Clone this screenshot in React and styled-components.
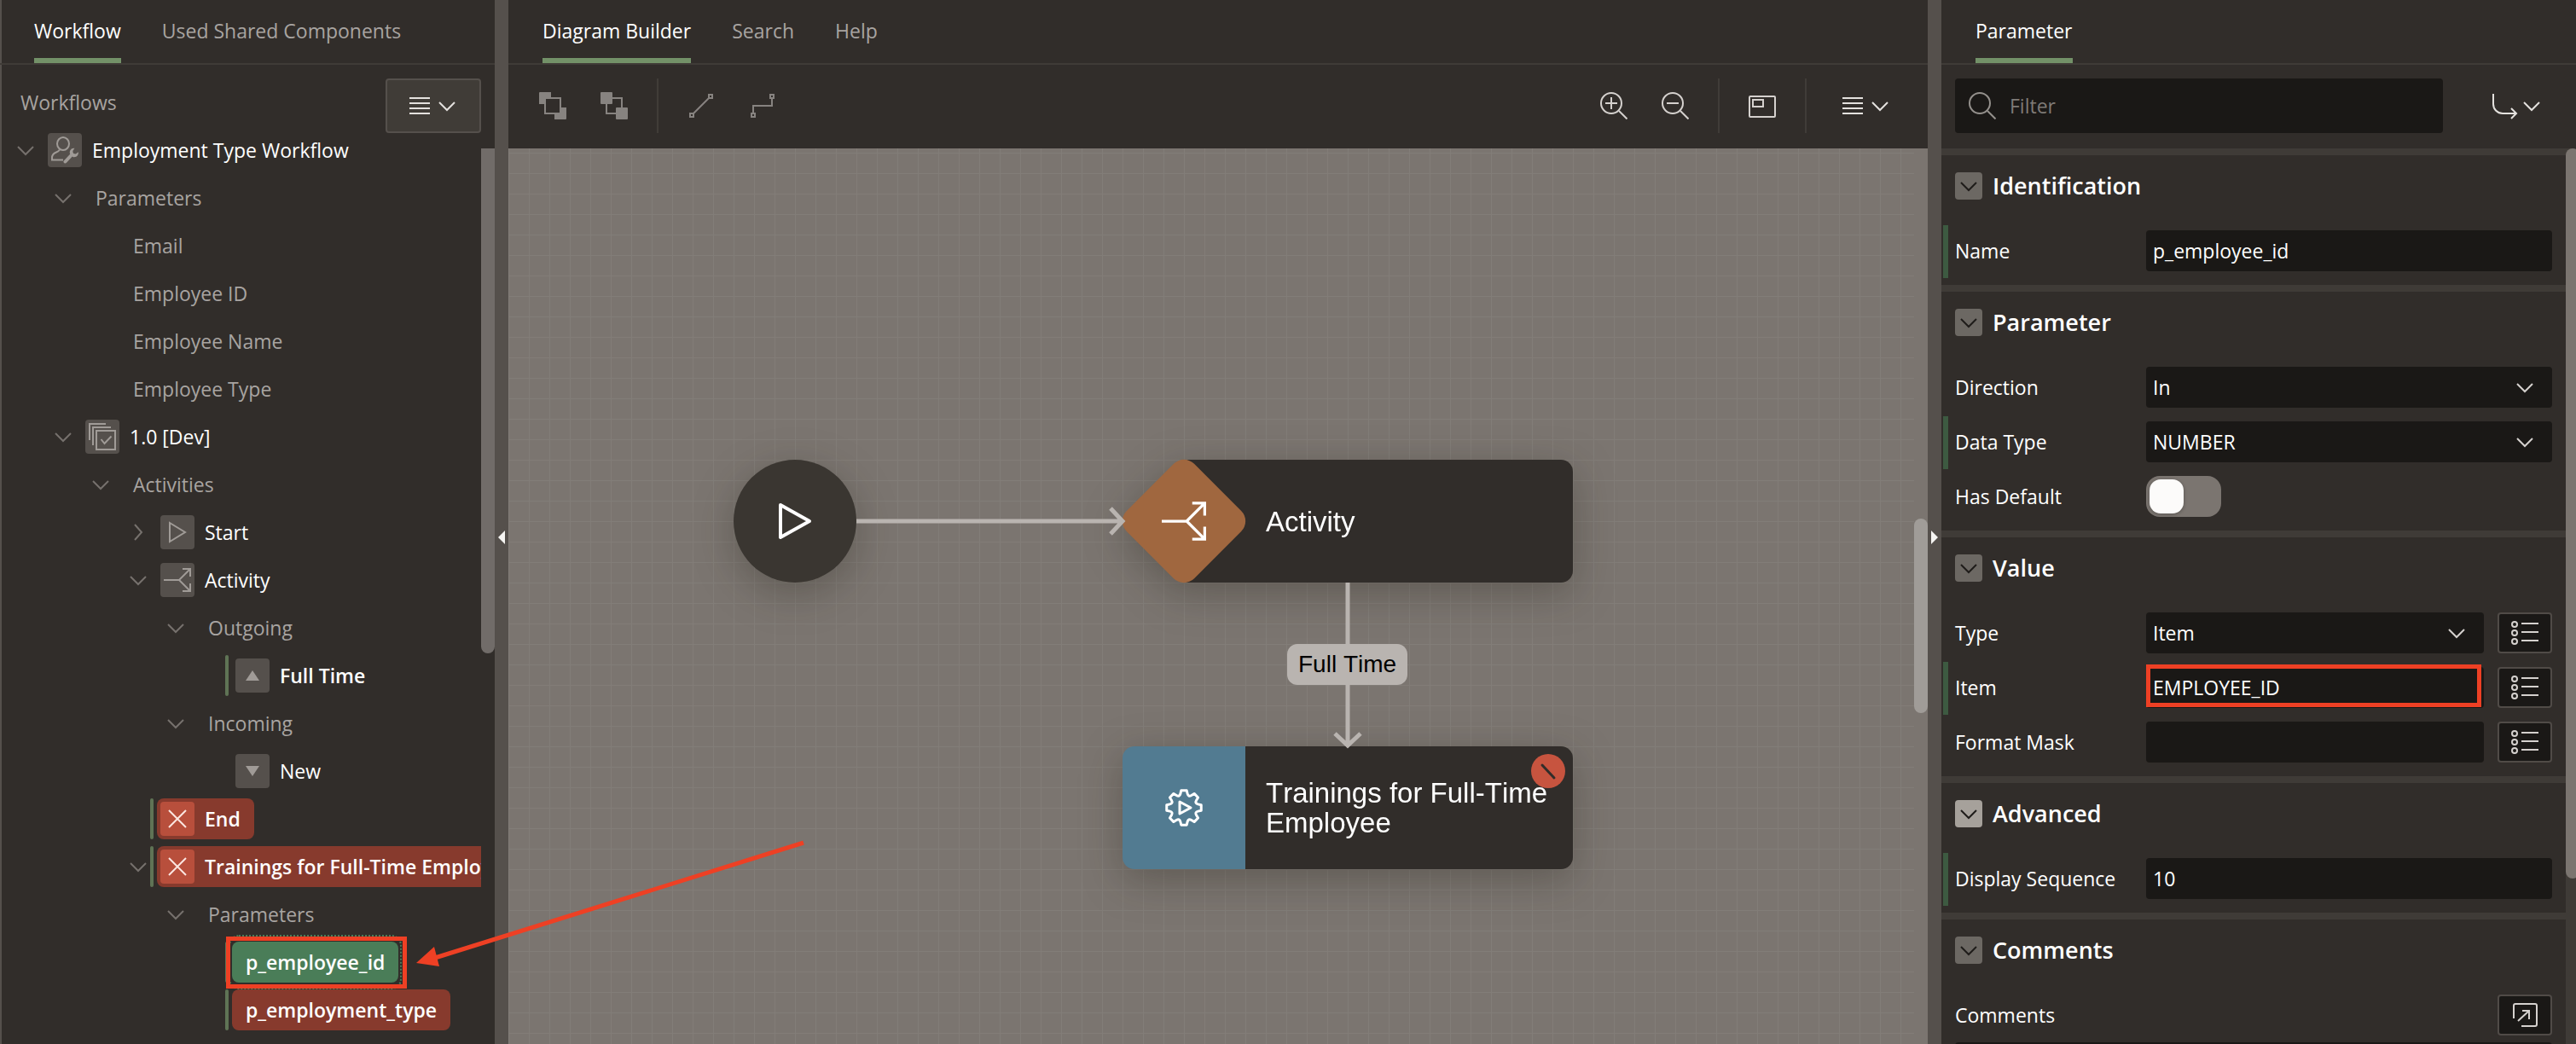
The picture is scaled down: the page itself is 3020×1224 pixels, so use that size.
import React, { useState } from "react";
import styled, { createGlobalStyle, css } from "styled-components";

const c = {
  panel: "#312d2a",
  line: "#3f3b37",
  splitter: "#55504c",
  field: "#1a1816",
  canvas: "#7b7570",
  grid: "#827d78",
  muted: "#a8a4a1",
  icon: "#d5d1ce",
  edge: "#b9b4b0",
  note: "#ee4024",
};

const GlobalStyle = createGlobalStyle`
  *, *::before, *::after { box-sizing: border-box; }
  body { margin: 0; background: ${c.panel}; color: #fff; overflow: hidden; }
  body, button, input, select, textarea {
    font-family: "Open Sans", "Noto Sans", sans-serif;
    font-size: 23px;
    line-height: 32px;
  }
  button { margin: 0; padding: 0; border: 0; background: none; color: inherit; cursor: pointer; }
  ul { margin: 0; padding: 0; list-style: none; }
  svg { display: block; flex: none; }
`;

/* ---------- icons ---------- */

const Svg = ({ size = 32, box = 32, width = 2, children }) => (
  <svg width={size} height={size} viewBox={`0 0 ${box} ${box}`} fill="none" stroke="currentColor"
    strokeWidth={width} aria-hidden="true">
    {children}
  </svg>
);

const Chevron = ({ right }) => (
  <Svg size={24} box={24}>
    <path d={right ? "M8 3l8 9-8 9" : "M3 8l9 9 9-9"} />
  </Svg>
);
const MenuLines = () => (
  <Svg size={24} box={24}><path d="M0 3h24M0 9h24M0 15h24M0 21h24" /></Svg>
);
const UserWrench = () => (
  <Svg>
    <ellipse cx="14" cy="8.5" rx="7" ry="7.5" />
    <path d="M10 15.5c-1 1.5-2 2.2-4 3-3 1.2-5 3-5 6.5v2.500h13" />
    <path d="M16.5 29.5l8-8.5" strokeWidth="4" strokeLinecap="round" />
    <path d="M27.5 13.8a5 5 0 0 0-5.5 6.5l3.5 3.700a5 5 0 0 0 6.300-5.700l-3 2.200-3-.5-.5-3z" fill="currentColor" stroke="none" />
  </Svg>
);
const Version = () => (
  <Svg>
    <path d="M1 20V1h19M5 26V5h21" />
    <rect x="9" y="9" width="22" height="22" />
    <path d="M14.5 19l4 5 8-8.5" />
  </Svg>
);
const Play = () => <Svg><path d="M7 5l18 11L7 27z" /></Svg>;
const Branch = ({ size }) => (
  <Svg size={size}><path d="M0 16h18L31 3M18 16l13 13M22 3h9v9M22 29h9v-9" /></Svg>
);
const TriangleUp = () => <Svg><path d="M16 10l8 12H8z" fill="currentColor" stroke="none" /></Svg>;
const TriangleDown = () => <Svg><path d="M16 22l8-12H8z" fill="currentColor" stroke="none" /></Svg>;
const Cross = () => <Svg><path d="M6 6l20 20M26 6L6 26" /></Svg>;
const BringFront = () => (
  <Svg>
    <path d="M0 1a1 1 0 0 1 1-1h13v14H0zM18 18h14v13a1 1 0 0 1-1 1H18z" fill="currentColor" stroke="none" />
    <rect x="7" y="7" width="18" height="18" fill={c.panel} />
  </Svg>
);
const SendBack = () => (
  <Svg>
    <rect x="7" y="7" width="18" height="18" />
    <rect width="14" height="14" rx="1" fill="currentColor" stroke="none" />
    <rect x="18" y="18" width="14" height="14" rx="1" fill="currentColor" stroke="none" />
  </Svg>
);
const StraightLine = () => (
  <Svg><path d="M3 25h4v4H3zM25 3h4v4h-4zM7 25L25 7" /></Svg>
);
const ElbowLine = () => (
  <Svg><path d="M3 25h4v4H3zM25 3h4v4h-4zM5 25V16h22V7" /></Svg>
);
const Lens = ({ plus, minus }) => (
  <Svg>
    <circle cx="13" cy="13" r="12" />
    <path d="M22 22l9.5 9.5" />
    {(plus || minus) && <path d="M6 13h14" />}
    {plus && <path d="M13 6v14" />}
  </Svg>
);
const MiniMap = () => (
  <Svg>
    <rect x="1" y="5" width="30" height="24" rx="1" />
    <rect x="5" y="9" width="12" height="8" />
  </Svg>
);
const GoTo = () => (
  <Svg><path d="M3 2v12a11 11 0 0 0 11 11h15M24 19l6 6-6 6" /></Svg>
);
const ListIcon = () => (
  <Svg>
    <circle cx="4" cy="6" r="3" /><circle cx="4" cy="16" r="3" /><circle cx="4" cy="26" r="3" />
    <path d="M12 5h20M12 15h20M12 25h20" />
  </Svg>
);
const OpenEditor = () => (
  <Svg>
    <path d="M3 20V5a2 2 0 0 1 2-2h23a2 2 0 0 1 2 2v22a2 2 0 0 1-2 2H12M8 23l13-12M13 11h8v10" />
  </Svg>
);

const gearPath = (() => {
  const pt = (r, deg) => {
    const a = (deg * Math.PI) / 180;
    return `${(24 + r * Math.cos(a)).toFixed(2)} ${(24 + r * Math.sin(a)).toFixed(2)}`;
  };
  let d = "";
  for (let i = 0; i < 8; i += 1) {
    const t = i * 45;
    d += `${i ? "L" : "M"}${pt(17, t - 14)} L${pt(20.5, t - 9)} L${pt(20.5, t + 9)} L${pt(17, t + 14)} Q${pt(13.5, t + 22.5)} ${pt(17, t + 31)} `;
  }
  return `${d}Z`;
})();
const Gear = () => (
  <Svg size={48} box={48} width={3}>
    <path d={gearPath} strokeLinejoin="round" />
    <path d="M19 17l13 7-13 7z" strokeLinejoin="round" />
  </Svg>
);

/* ---------- frame ---------- */

const Frame = styled.div`
  position: relative;
  display: grid;
  grid-template-columns: 580px 16px minmax(0, 1fr) 16px 744px;
  height: 100vh;
  overflow: hidden;
`;

const Panel = styled.section`
  display: flex;
  flex-direction: column;
  min-width: 0;
  min-height: 0;
  background: ${c.panel};
  ${(p) => p.$edge && css`box-shadow: inset 2px 0 ${c.splitter};`}
`;

const TabBar = styled.div`
  display: flex;
  flex: none;
  gap: 48px;
  height: 76px;
  padding: 0 40px;
  border-bottom: 2px solid ${c.line};
`;

const Tab = styled.button`
  height: 74px;
  padding-top: 4px;
  border-bottom: 6px solid ${(p) => (p.$active ? "#739168" : "transparent")};
  color: ${(p) => (p.$active ? "#fff" : c.muted)};
  white-space: nowrap;
`;

const Splitter = styled.div`
  display: flex;
  align-items: center;
  justify-content: center;
  padding-top: 36px;
  background: ${c.splitter};
`;

const Collapse = styled.button`
  border: 8px solid transparent;
  border-left-width: ${(p) => (p.$right ? 8 : 0)}px;
  border-right-width: ${(p) => (p.$right ? 0 : 8)}px;
  border-left-color: ${(p) => (p.$right ? "#f5f4f2" : "transparent")};
  border-right-color: ${(p) => (p.$right ? "transparent" : "#f5f4f2")};
`;

const Tabs = ({ items }) => (
  <TabBar role="tablist">
    {items.map((name, i) => (
      <Tab key={name} type="button" role="tab" aria-selected={i === 0} $active={i === 0}>{name}</Tab>
    ))}
  </TabBar>
);

/* ---------- tree ---------- */

const TreeHead = styled.div`
  display: flex;
  flex: none;
  align-items: flex-start;
  justify-content: space-between;
  height: 72px;
  padding: 16px 16px 0 24px;
  color: ${c.muted};
  line-height: 56px;
`;

const MenuButton = styled.button`
  display: flex;
  align-items: center;
  gap: 8px;
  height: 64px;
  padding: 0 24px;
  color: #e4e1de;
  ${(p) => p.$boxed && css`
    padding: 0 26px;
    border: 2px solid ${c.splitter};
    border-radius: 4px;
    background: #403c37;
  `}
`;

const TreeBody = styled.div`
  display: flex;
  flex: 1;
  min-height: 0;
`;

const Tree = styled.ul`
  flex: 1;
  min-width: 0;
  overflow: hidden;
`;

const Row = styled.li`
  display: flex;
  align-items: center;
  height: 56px;
  padding-left: ${(p) => p.$level * 44 + 18}px;
`;

const Twisty = styled.button`
  display: flex;
  flex: none;
  width: 26px;
  color: #76716d;
`;

const Change = styled.span`
  flex: none;
  width: 4px;
  height: 48px;
  margin-right: 4px;
  border-radius: 2px;
  background: ${(p) => (p.$on ? "#5f7355" : "transparent")};
`;

const pillTone = { error: "#873a2d", selected: "#4a7d58" };

const pillWeight = (p) => {
  if (p.$strong) return 600;
  return p.$group ? 400 : 500;
};

const Pill = styled.div`
  position: relative;
  display: flex;
  flex: none;
  align-items: center;
  height: 48px;
  padding: 0 4px;
  border-radius: 8px;
  background: ${(p) => pillTone[p.$tone] || "transparent"};
  color: ${(p) => (p.$group ? c.muted : "#fff")};
  font-weight: ${pillWeight};
  white-space: nowrap;
  ${(p) => p.$tone === "selected" && css`
    &::after {
      content: "";
      position: absolute;
      inset: -8px -4px;
      border: 2px dotted #4a7d58;
      border-radius: 12px;
    }
  `}
`;

const TypeIcon = styled.span`
  display: flex;
  align-items: center;
  justify-content: center;
  width: 40px;
  height: 40px;
  border-radius: 4px;
  background: ${(p) => (p.$error ? "#b84f3c" : c.splitter)};
  color: ${(p) => (p.$error ? "#fbe6e1" : "#a09b97")};
`;

const Caption = styled.span`
  padding: 0 12px;
`;

const PillNote = styled.span`
  position: absolute;
  inset: -6px -10px -7px -7px;
  z-index: 1;
  border: 5px solid ${c.note};
`;

const Track = styled.div`
  flex: none;
  width: ${(p) => p.$width || 16}px;
  padding-top: ${(p) => p.$top || 0}px;
  overflow: hidden;
  ${(p) => p.$track && css`background: ${p.$track};`}
`;

const Thumb = styled.div`
  width: 16px;
  height: ${(p) => p.$length}px;
  border-radius: ${(p) => (p.$cut ? "0 0 8px 8px" : "8px")};
  background: ${(p) => p.$color};
`;

const nodes = [
  { level: 0, label: "Employment Type Workflow", icon: UserWrench, open: true },
  { level: 1, label: "Parameters", open: true, group: true },
  { level: 2, label: "Email", group: true },
  { level: 2, label: "Employee ID", group: true },
  { level: 2, label: "Employee Name", group: true },
  { level: 2, label: "Employee Type", group: true },
  { level: 1, label: "1.0 [Dev]", icon: Version, open: true },
  { level: 2, label: "Activities", open: true, group: true },
  { level: 3, label: "Start", icon: Play, open: false },
  { level: 3, label: "Activity", icon: Branch, open: true },
  { level: 4, label: "Outgoing", open: true, group: true },
  { level: 5, label: "Full Time", icon: TriangleUp, changed: true, strong: true },
  { level: 4, label: "Incoming", open: true, group: true },
  { level: 5, label: "New", icon: TriangleDown },
  { level: 3, label: "End", icon: Cross, changed: true, strong: true, tone: "error" },
  { level: 3, label: "Trainings for Full-Time Employee", icon: Cross, open: true, changed: true, strong: true, tone: "error" },
  { level: 4, label: "Parameters", open: true, group: true },
  { level: 5, label: "p_employee_id", changed: true, strong: true, tone: "selected" },
  { level: 5, label: "p_employment_type", changed: true, strong: true, tone: "error" },
];

const TreeRow = ({ node }) => {
  const Icon = node.icon;
  const branch = node.open !== undefined;
  return (
    <Row role="treeitem" aria-level={node.level + 1} aria-expanded={branch ? node.open : undefined}
      aria-selected={node.tone === "selected"} $level={node.level}>
      <Twisty as={branch ? "button" : "span"} type={branch ? "button" : undefined}
        aria-label={branch ? `Toggle ${node.label}` : undefined}>
        {branch && <Chevron right={!node.open} />}
      </Twisty>
      <Change $on={node.changed} />
      <Pill $tone={node.tone} $group={node.group} $strong={node.strong}>
        {Icon && <TypeIcon $error={node.tone === "error"}><Icon /></TypeIcon>}
        <Caption>{node.label}</Caption>
        {node.tone === "selected" && <PillNote />}
      </Pill>
    </Row>
  );
};

/* ---------- diagram ---------- */

const Toolbar = styled.div`
  display: flex;
  flex: none;
  align-items: center;
  gap: 8px;
  height: 98px;
  padding: 0 20px 2px;
`;

const ToolButton = styled.button`
  display: flex;
  align-items: center;
  justify-content: center;
  width: 64px;
  height: 64px;
  color: ${(p) => (p.disabled ? "#878380" : c.icon)};
`;

const Divider = styled.span`
  width: 2px;
  height: 64px;
  margin: 0 10px;
  background: #403c38;
`;

const Spacer = styled.span`
  flex: 1;
`;

const CanvasRow = styled.div`
  display: flex;
  flex: 1;
  min-height: 0;
  background: ${c.canvas};
`;

const Canvas = styled.div`
  position: relative;
  flex: 1;
  min-width: 0;
  overflow: hidden;
  background-image: linear-gradient(to right, ${c.grid} 1px, transparent 1px),
    linear-gradient(to bottom, ${c.grid} 1px, transparent 1px);
  background-size: 24px 24px;
  background-position: 0 5px;
  font-family: "Liberation Sans", Arial, sans-serif;
  font-kerning: none;
`;

const Node = styled.div`
  position: absolute;
  left: ${(p) => p.$x}px;
  top: ${(p) => p.$y}px;
  display: flex;
  width: 528px;
  height: 144px;
  filter: drop-shadow(0 12px 24px rgba(30, 25, 15, 0.3));
`;

const StartNode = styled(Node)`
  align-items: center;
  justify-content: center;
  width: 144px;
  border-radius: 50%;
  background: #3a3631;
`;

const NodeBody = styled.div`
  display: flex;
  flex: 1;
  align-items: center;
  padding: 0 20px 0 24px;
  border-radius: 0 14px 14px 0;
  background: ${c.panel};
  font-size: 33px;
  line-height: 35px;
  ${(p) => p.$tucked && css`
    margin-left: -72px;
    padding-left: 96px;
  `}
`;

const NodeIcon = styled.div`
  position: relative;
  z-index: 1;
  display: flex;
  align-items: center;
  justify-content: center;
  width: 144px;
  border-radius: 14px 0 0 14px;
  background: ${(p) => p.$color || "transparent"};
`;

const Diamond = styled.span`
  position: absolute;
  z-index: -1;
  width: 112px;
  height: 112px;
  border-radius: 17px;
  background: #a0673f;
  transform: rotate(45deg);
`;

const Edges = styled.svg`
  position: absolute;
  left: 0;
  top: 0;
`;

const EdgeLabel = styled.div`
  position: absolute;
  left: 913px;
  top: 581px;
  padding: 8px 13px;
  border-radius: 12px;
  background: ${c.edge};
  color: #000;
  font-size: 28px;
`;

const ErrorBadge = styled.span`
  position: absolute;
  top: 9px;
  right: 9px;
  display: flex;
  align-items: center;
  justify-content: center;
  width: 40px;
  height: 40px;
  border-radius: 50%;
  background: #c7543f;
  color: ${c.panel};
`;

/* ---------- properties ---------- */

const FilterBar = styled.div`
  display: flex;
  flex: none;
  align-items: center;
  gap: 32px;
  height: 98px;
  padding: 0 16px 2px;
`;

const FilterBox = styled.label`
  display: flex;
  flex: 1;
  align-items: center;
  gap: 16px;
  height: 64px;
  padding: 0 16px;
  border-radius: 4px;
  background: ${c.field};
  color: #94908c;
`;

const FilterInput = styled.input`
  flex: 1;
  min-width: 0;
  padding: 0;
  border: 0;
  outline: 0;
  background: none;
  color: #fff;
  &::placeholder { color: #7f7b77; opacity: 1; }
`;

const GoButton = styled(MenuButton)`
  gap: 4px;
`;

const PropBody = styled.div`
  display: flex;
  flex: 1;
  min-height: 0;
  overflow: hidden;
`;

const PropList = styled.div`
  flex: 1;
  min-width: 0;
`;

const Section = styled.section`
  padding-bottom: 8px;
  border-top: 8px solid ${c.line};
`;

const SectionHead = styled.header`
  display: flex;
  align-items: center;
  gap: 12px;
  padding: 20px 16px 28px;
`;

const SectionToggle = styled.button`
  display: flex;
  align-items: center;
  justify-content: center;
  width: 32px;
  height: 32px;
  border-radius: 4px;
  background: ${(p) => (p.$hot ? "#a6a19b" : "#6c6863")};
  color: #1f1c1a;
`;

const Title = styled.h2`
  margin: 0;
  font-size: 27px;
  font-weight: 600;
  line-height: 32px;
`;

const PropRow = styled.div`
  display: grid;
  grid-template-columns: 224px minmax(0, 1fr) auto;
  align-items: center;
  height: 64px;
  padding: 0 16px;
  ${(p) => p.$changed && css`
    background: linear-gradient(#3d5a41, #3d5a41) 2px 2px / 6px 62px no-repeat;
  `}
`;

const Field = styled.div`
  position: relative;
  display: flex;
  align-items: center;
`;

const control = css`
  width: 100%;
  height: 48px;
  padding: 0 8px;
  border: 0;
  border-radius: 4px;
  outline: 0;
  background: ${c.field};
  color: #fff;
`;

const TextInput = styled.input`${control}`;

const Select = styled.select`
  ${control}
  appearance: none;
`;

const SelectArrow = styled.span`
  position: absolute;
  right: 20px;
  color: ${c.icon};
  pointer-events: none;
`;

const FieldNote = styled.span`
  position: absolute;
  inset: -3px 3px 1px 0;
  border: 5px solid ${c.note};
  pointer-events: none;
`;

const SideButton = styled.button`
  display: flex;
  align-items: center;
  justify-content: center;
  grid-column: 3;
  width: 64px;
  height: 48px;
  margin-left: 16px;
  border: 2px solid #504b47;
  border-radius: 4px;
  background: ${c.field};
  color: ${c.icon};
`;

const Switch = styled.input`
  appearance: none;
  width: 88px;
  height: 48px;
  margin: 0;
  padding: 4px;
  border-radius: 16px;
  background: ${c.canvas};
  &::before {
    content: "";
    display: block;
    width: 40px;
    height: 40px;
    border-radius: 13px;
    background: #fcfbfa;
    box-shadow: 0 1px 4px rgba(0, 0, 0, 0.3);
  }
  &:checked::before { margin-left: auto; }
`;

const TextArea = styled.textarea`
  ${control}
  display: block;
  width: auto;
  min-width: calc(100% - 32px);
  height: 160px;
  margin: 0 16px;
  resize: none;
`;

const sections = [
  { title: "Identification", rows: [{ id: "name", label: "Name", kind: "text", value: "p_employee_id", changed: true }] },
  {
    title: "Parameter",
    rows: [
      { id: "direction", label: "Direction", kind: "select", value: "In" },
      { id: "datatype", label: "Data Type", kind: "select", value: "NUMBER", changed: true },
      { id: "default", label: "Has Default", kind: "switch" },
    ],
  },
  {
    title: "Value",
    rows: [
      { id: "type", label: "Type", kind: "select", value: "Item", side: ListIcon },
      { id: "item", label: "Item", kind: "text", value: "EMPLOYEE_ID", changed: true, side: ListIcon, note: true },
      { id: "mask", label: "Format Mask", kind: "text", value: "", side: ListIcon },
    ],
  },
  {
    title: "Advanced",
    hot: true,
    rows: [{ id: "sequence", label: "Display Sequence", kind: "text", value: "10", changed: true }],
  },
  { title: "Comments", rows: [{ id: "comments", label: "Comments", kind: "area", side: OpenEditor }] },
];

const Property = ({ row }) => {
  const Side = row.side;
  const [on, setOn] = useState(false);
  return (
    <>
      <PropRow $changed={row.changed}>
        <label htmlFor={row.id}>{row.label}</label>
        {row.kind !== "area" && (
          <Field>
            {row.kind === "text" && <TextInput id={row.id} type="text" defaultValue={row.value} />}
            {row.kind === "select" && (
              <>
                <Select id={row.id} defaultValue={row.value}><option>{row.value}</option></Select>
                <SelectArrow><Chevron /></SelectArrow>
              </>
            )}
            {row.kind === "switch" && (
              <Switch id={row.id} type="checkbox" role="switch" checked={on} onChange={() => setOn(!on)} />
            )}
            {row.note && <FieldNote />}
          </Field>
        )}
        {Side && <SideButton type="button" aria-label={`Pick ${row.label}`}><Side /></SideButton>}
      </PropRow>
      {row.kind === "area" && <TextArea id={row.id} />}
    </>
  );
};

const Pointer = styled.svg`
  position: absolute;
  left: 480px;
  top: 980px;
  pointer-events: none;
`;

export default function App() {
  return (
    <Frame>
      <GlobalStyle />

      <Panel $edge>
        <Tabs items={["Workflow", "Used Shared Components"]} />
        <TreeHead>
          <span>Workflows</span>
          <MenuButton type="button" aria-label="Tree menu" $boxed><MenuLines /><Chevron /></MenuButton>
        </TreeHead>
        <TreeBody>
          <Tree role="tree" aria-label="Workflows">
            {nodes.map((node, i) => <TreeRow key={i} node={node} />)}
          </Tree>
          <Track $top={26}><Thumb $length={592} $color="#716c69" $cut /></Track>
        </TreeBody>
      </Panel>

      <Splitter><Collapse type="button" aria-label="Collapse tree" /></Splitter>

      <Panel>
        <Tabs items={["Diagram Builder", "Search", "Help"]} />
        <Toolbar>
          <ToolButton type="button" aria-label="Bring to front" disabled><BringFront /></ToolButton>
          <ToolButton type="button" aria-label="Send to back" disabled><SendBack /></ToolButton>
          <Divider />
          <ToolButton type="button" aria-label="Straight connection" disabled><StraightLine /></ToolButton>
          <ToolButton type="button" aria-label="Elbow connection" disabled><ElbowLine /></ToolButton>
          <Spacer />
          <ToolButton type="button" aria-label="Zoom in"><Lens plus /></ToolButton>
          <ToolButton type="button" aria-label="Zoom out"><Lens minus /></ToolButton>
          <Divider />
          <ToolButton type="button" aria-label="Overview"><MiniMap /></ToolButton>
          <Divider />
          <MenuButton type="button" aria-label="Diagram menu"><MenuLines /><Chevron /></MenuButton>
        </Toolbar>
        <CanvasRow>
          <Canvas>
            <StartNode $x={264} $y={365}>
              <Svg size={48} box={48} width={4}>
                <path d="M7 5l34 19L7 43z" strokeLinejoin="round" />
              </Svg>
            </StartNode>
            <Node $x={720} $y={365}>
              <NodeIcon><Diamond /><Branch size={52} /></NodeIcon>
              <NodeBody $tucked>Activity</NodeBody>
            </Node>
            <Node $x={720} $y={701}>
              <NodeIcon $color="#527b91"><Gear /></NodeIcon>
              <NodeBody>Trainings for Full-Time Employee</NodeBody>
              <ErrorBadge>
                <Svg size={40} box={40} width={3}><path d="M13 13l14 15" strokeLinecap="round" /></Svg>
              </ErrorBadge>
            </Node>
            <Edges width="1260" height="720" fill="none" stroke={c.edge} strokeWidth="5" aria-hidden="true">
              <path d="M408 437h312M706 422l14 15-14 15" />
              <path d="M984 509v190M969 686l15 14 15-14" />
            </Edges>
            <EdgeLabel>Full Time</EdgeLabel>
          </Canvas>
          <Track $top={434}><Thumb $length={228} $color="#a09c98" /></Track>
        </CanvasRow>
      </Panel>

      <Splitter><Collapse type="button" aria-label="Collapse properties" $right /></Splitter>

      <Panel>
        <Tabs items={["Parameter"]} />
        <FilterBar>
          <FilterBox>
            <Lens />
            <FilterInput type="text" placeholder="Filter" aria-label="Filter" />
          </FilterBox>
          <GoButton type="button" aria-label="Go to group"><GoTo /><Chevron /></GoButton>
        </FilterBar>
        <PropBody>
          <PropList>
            {sections.map((s) => (
              <Section key={s.title}>
                <SectionHead>
                  <SectionToggle type="button" aria-label={`Toggle ${s.title}`} $hot={s.hot}><Chevron /></SectionToggle>
                  <Title>{s.title}</Title>
                </SectionHead>
                {s.rows.map((row) => <Property key={row.id} row={row} />)}
              </Section>
            ))}
          </PropList>
          <Track $width={12} $track={c.line}><Thumb $length={856} $color={c.canvas} /></Track>
        </PropBody>
      </Panel>

      <Pointer width="470" height="160" aria-hidden="true">
        <path d="M462 8L30 143" stroke={c.note} strokeWidth="5" />
        <path d="M8 149l21-19 6 23z" fill={c.note} />
      </Pointer>
    </Frame>
  );
}
